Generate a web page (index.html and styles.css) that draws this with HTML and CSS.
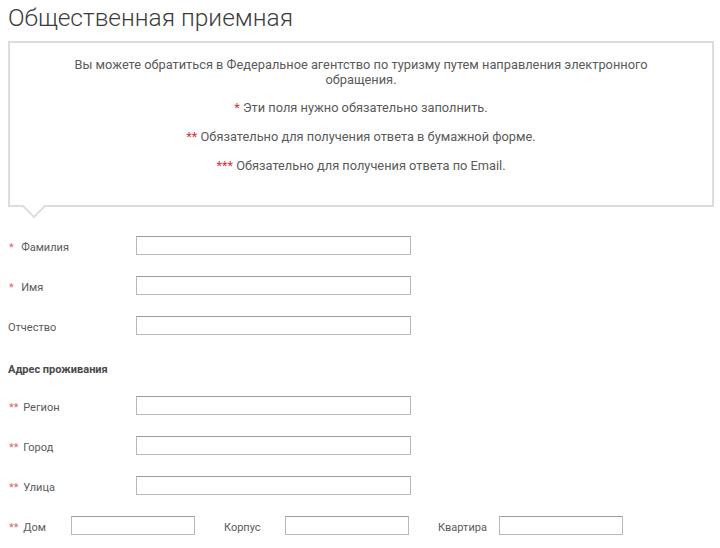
FILE: index.html
```html
<!DOCTYPE html>
<html lang="ru">
<head>
<meta charset="utf-8">
<link rel="stylesheet" href="styles.css">
</head>
<body>
<div class="page">
  <h1 class="title">Общественная приемная</h1>
  <div class="notice">
    <p class="intro">Вы можете обратиться в Федеральное агентство по туризму путем направления электронного обращения.</p>
    <p class="note"><span class="req">*</span> Эти поля нужно обязательно заполнить.</p>
    <p class="note"><span class="req">**</span> Обязательно для получения ответа в бумажной форме.</p>
    <p class="note"><span class="req">***</span> Обязательно для получения ответа по Email.</p>
  </div>
  <form class="form">
    <div class="row"><label class="lbl"><span class="req">*</span>&nbsp; Фамилия</label><input class="field" type="text"></div>
    <div class="row"><label class="lbl"><span class="req">*</span>&nbsp; Имя</label><input class="field" type="text"></div>
    <div class="row"><label class="lbl">Отчество</label><input class="field" type="text"></div>
    <div class="section">Адрес проживания</div>
    <div class="row"><label class="lbl"><span class="req">**</span> Регион</label><input class="field" type="text"></div>
    <div class="row"><label class="lbl"><span class="req">**</span> Город</label><input class="field" type="text"></div>
    <div class="row"><label class="lbl"><span class="req">**</span> Улица</label><input class="field" type="text"></div>
    <div class="row house">
      <label class="lbl lbl-s"><span class="req">**</span> Дом</label><input class="field small" type="text">
      <label class="lbl lbl-m">Корпус</label><input class="field small" type="text">
      <label class="lbl lbl-m">Квартира</label><input class="field small" type="text">
    </div>
  </form>
</div>
</body>
</html>
```
FILE: styles.css
```css
* { box-sizing: border-box; }
html, body { margin: 0; padding: 0; background: #fff; }
body {
  font-family: "Roboto", "Liberation Sans", sans-serif;
  color: #5a5a5a;
}
.page { padding: 0 6px 0 8px; }
.title {
  margin: 0;
  padding-top: 3px;
  font-family: "Roboto", "Liberation Sans", sans-serif;
  font-weight: 300;
  font-size: 24.5px;
  line-height: 30px;
  color: #3c3c3c;
  height: 41px;
}
.notice {
  position: relative;
  border: 2px solid #ddd;
  height: 166px;
  padding: 14px 58px 0;
  text-align: center;
  font-size: 12.8px;
  color: #5a5a5a;
}
.notice::after {
  content: "";
  position: absolute;
  left: 16px;
  bottom: -10px;
  width: 14px;
  height: 14px;
  background: #fff;
  border-right: 2px solid #ddd;
  border-bottom: 2px solid #ddd;
  transform: rotate(45deg);
}
.intro { margin: 0 0 13px; line-height: 15px; }
.note { margin: 0 0 14px; line-height: 15px; }
.req { color: #d9333a; }
.form { padding-top: 29px; font-size: 11px; }
.row {
  display: flex;
  align-items: center;
  height: 19px;
  margin-bottom: 21px;
}
.lbl { width: 128px; flex: none; padding-top: 4px; }
.form .req { color: #e06a6a; margin: 0 2px 0 1px; }
.field {
  width: 275px;
  height: 19px;
  border: 1px solid #b8b8b8;
  border-top-color: #9c9c9c;
  background: #fff;
  margin: 0;
  padding: 0;
  flex: none;
}
.section {
  font-weight: bold;
  color: #4a4a4a;
  height: 19px;
  line-height: 19px;
  margin-bottom: 21px;
  padding-top: 4px;
  margin-top: 1px;
}
.house .lbl-s { width: 63px; }
.house .lbl-m { width: 90px; padding-left: 29px; }
.small { width: 124px; }
```
